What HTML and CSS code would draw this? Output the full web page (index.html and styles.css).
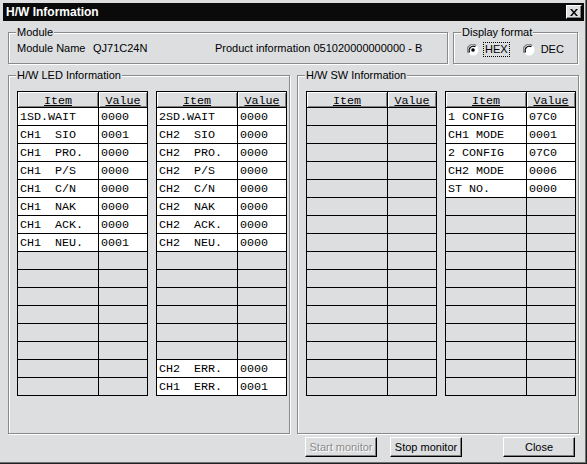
FILE: index.html
```html
<!DOCTYPE html>
<html>
<head>
<meta charset="utf-8">
<link rel="stylesheet" href="styles.css">
</head>
<body>
<div class="window">
  <div class="titlebar">
    <span class="title">H/W Information</span>
    <span class="close-btn"><svg width="8" height="7" viewBox="0 0 8 7"><path d="M0 0h2l2 2.5L6 0h2L5 3.5 8 7H6L4 4.5 2 7H0l3-3.5z" fill="#000"/></svg></span>
  </div>
  <div class="top-row">
    <fieldset class="group module">
      <legend>Module</legend>
      <div class="module-row">
        <span class="mod-label">Module Name</span>
        <span class="mod-name">QJ71C24N</span>
        <span class="mod-prod">Product information 051020000000000 - B</span>
      </div>
    </fieldset>
    <fieldset class="group format">
      <legend>Display format</legend>
      <div class="radio-row">
        <span class="radio checked"><svg width="12" height="12" viewBox="0 0 12 12"><circle cx="6" cy="6" r="5.5" fill="#fff"/><path d="M1.5 9.2A5.5 5.5 0 0 1 9.2 1.5" fill="none" stroke="#808080" stroke-width="1.2"/><path d="M2.6 8.4A4.3 4.3 0 0 1 8.4 2.6" fill="none" stroke="#000" stroke-width="1.2"/><circle cx="6" cy="6" r="1.8" fill="#000"/></svg></span>
        <span class="radio-label focus">HEX</span>
        <span class="radio"><svg width="12" height="12" viewBox="0 0 12 12"><circle cx="6" cy="6" r="5.5" fill="#fff"/><path d="M1.5 9.2A5.5 5.5 0 0 1 9.2 1.5" fill="none" stroke="#808080" stroke-width="1.2"/><path d="M2.6 8.4A4.3 4.3 0 0 1 8.4 2.6" fill="none" stroke="#000" stroke-width="1.2"/></svg></span>
        <span class="radio-label">DEC</span>
      </div>
    </fieldset>
  </div>
  <div class="main-row">
    <fieldset class="group info">
      <legend>H/W LED Information</legend>
      <div class="tables">
        <div class="grid">
          <div class="hd">Item</div><div class="hd">Value</div>
          <div class="c">1SD.WAIT</div><div class="c">0000</div>
          <div class="c">CH1  SIO</div><div class="c">0001</div>
          <div class="c">CH1  PRO.</div><div class="c">0000</div>
          <div class="c">CH1  P/S</div><div class="c">0000</div>
          <div class="c">CH1  C/N</div><div class="c">0000</div>
          <div class="c">CH1  NAK</div><div class="c">0000</div>
          <div class="c">CH1  ACK.</div><div class="c">0000</div>
          <div class="c">CH1  NEU.</div><div class="c">0001</div>
          <div class="e"></div><div class="e"></div>
          <div class="e"></div><div class="e"></div>
          <div class="e"></div><div class="e"></div>
          <div class="e"></div><div class="e"></div>
          <div class="e"></div><div class="e"></div>
          <div class="e"></div><div class="e"></div>
          <div class="e"></div><div class="e"></div>
          <div class="e"></div><div class="e"></div>
        </div>
        <div class="grid">
          <div class="hd">Item</div><div class="hd">Value</div>
          <div class="c">2SD.WAIT</div><div class="c">0000</div>
          <div class="c">CH2  SIO</div><div class="c">0000</div>
          <div class="c">CH2  PRO.</div><div class="c">0000</div>
          <div class="c">CH2  P/S</div><div class="c">0000</div>
          <div class="c">CH2  C/N</div><div class="c">0000</div>
          <div class="c">CH2  NAK</div><div class="c">0000</div>
          <div class="c">CH2  ACK.</div><div class="c">0000</div>
          <div class="c">CH2  NEU.</div><div class="c">0000</div>
          <div class="e"></div><div class="e"></div>
          <div class="e"></div><div class="e"></div>
          <div class="e"></div><div class="e"></div>
          <div class="e"></div><div class="e"></div>
          <div class="e"></div><div class="e"></div>
          <div class="e"></div><div class="e"></div>
          <div class="c">CH2  ERR.</div><div class="c">0000</div>
          <div class="c">CH1  ERR.</div><div class="c">0001</div>
        </div>
      </div>
    </fieldset>
    <fieldset class="group info">
      <legend>H/W SW Information</legend>
      <div class="tables">
        <div class="grid">
          <div class="hd">Item</div><div class="hd">Value</div>
          <div class="e"></div><div class="e"></div>
          <div class="e"></div><div class="e"></div>
          <div class="e"></div><div class="e"></div>
          <div class="e"></div><div class="e"></div>
          <div class="e"></div><div class="e"></div>
          <div class="e"></div><div class="e"></div>
          <div class="e"></div><div class="e"></div>
          <div class="e"></div><div class="e"></div>
          <div class="e"></div><div class="e"></div>
          <div class="e"></div><div class="e"></div>
          <div class="e"></div><div class="e"></div>
          <div class="e"></div><div class="e"></div>
          <div class="e"></div><div class="e"></div>
          <div class="e"></div><div class="e"></div>
          <div class="e"></div><div class="e"></div>
          <div class="e"></div><div class="e"></div>
        </div>
        <div class="grid">
          <div class="hd">Item</div><div class="hd">Value</div>
          <div class="c">1 CONFIG</div><div class="c">07C0</div>
          <div class="c">CH1 MODE</div><div class="c">0001</div>
          <div class="c">2 CONFIG</div><div class="c">07C0</div>
          <div class="c">CH2 MODE</div><div class="c">0006</div>
          <div class="c">ST NO.</div><div class="c">0000</div>
          <div class="e"></div><div class="e"></div>
          <div class="e"></div><div class="e"></div>
          <div class="e"></div><div class="e"></div>
          <div class="e"></div><div class="e"></div>
          <div class="e"></div><div class="e"></div>
          <div class="e"></div><div class="e"></div>
          <div class="e"></div><div class="e"></div>
          <div class="e"></div><div class="e"></div>
          <div class="e"></div><div class="e"></div>
          <div class="e"></div><div class="e"></div>
          <div class="e"></div><div class="e"></div>
        </div>
      </div>
    </fieldset>
  </div>
  <div class="buttons">
    <button class="btn disabled">Start monitor</button>
    <button class="btn stop">Stop monitor</button>
    <button class="btn close">Close</button>
  </div>
</div>
</body>
</html>
```
FILE: styles.css
```css
html, body {
  margin: 0;
  padding: 0;
  background: #dcdee0;
}
.window {
  width: 587px;
  height: 464px;
  box-sizing: border-box;
  background: #dcdee0;
  border-right: 1px solid #202020;
  border-bottom: 1px solid #202020;
  box-shadow: inset -1px -1px 0 #707070;
  padding: 3px 2px 0 3px;
  font-family: "Liberation Sans", Arial, sans-serif;
  font-size: 11px;
  color: #000;
  display: flex;
  flex-direction: column;
}
.titlebar {
  height: 18px;
  background: #0a0a0a;
  display: flex;
  align-items: center;
  justify-content: space-between;
  padding: 0 2px 0 3px;
}
.title {
  color: #fff;
  font-weight: bold;
  font-size: 12px;
}
.close-btn {
  width: 16px;
  height: 14px;
  box-sizing: border-box;
  background: #dcdee0;
  border: 1px solid;
  border-color: #fff #000 #000 #fff;
  box-shadow: inset -1px -1px 0 #808080;
  display: flex;
  align-items: center;
  justify-content: center;
}
.group {
  margin: 0;
  border: 1px solid #8a8a8a;
  box-shadow: inset 1px 1px 0 #fff, 1px 1px 0 #fff;
  min-width: 0;
}
.group legend {
  padding: 0 1px;
  margin-left: -1px;
  line-height: 13px;
  font-weight: normal;
  background: #dcdee0;
}
.top-row {
  display: flex;
  margin-top: 5px;
  padding-left: 5px;
}
.module {
  width: 440px;
  box-sizing: border-box;
  padding: 3px 8px 6px 8px;
}
.module-row {
  display: flex;
  line-height: 13px;
}
.mod-label { width: 76px; }
.mod-name { width: 122px; }
.format {
  width: 125px;
  box-sizing: border-box;
  margin-left: 5px;
  padding: 3px 8px 6px 8px;
}
.radio-row {
  display: flex;
  align-items: center;
  line-height: 13px;
  padding-left: 5px;
}
.radio {
  width: 12px;
  height: 12px;
  display: flex;
}
.radio-label {
  margin-left: 4px;
  padding: 0 1px;
  border: 1px dotted transparent;
}
.radio-label.focus {
  border-color: #000;
  margin-right: 13px;
}
.main-row {
  display: flex;
  margin-top: 5px;
  padding-left: 5px;
}
.info {
  width: 282px;
  height: 365px;
  box-sizing: border-box;
  padding: 9px 8px 0 8px;
}
.info + .info {
  margin-left: 7px;
}
.tables {
  display: flex;
  gap: 8px;
}
.grid {
  display: grid;
  grid-template-columns: 80px 48px;
  grid-template-rows: 15px repeat(16, 17px);
  gap: 1px;
  padding: 1px;
  background: #000;
  font-family: "Liberation Mono", "Courier New", monospace;
  font-size: 11.7px;
}
.hd {
  background: #dcdee0;
  box-shadow: inset 1px 1px 0 #fff, inset -1px -1px 0 #808080;
  text-align: center;
  line-height: 14px;
  padding-top: 2px;
  box-sizing: border-box;
  text-decoration: underline;
  overflow: hidden;
}
.c {
  background: #fff;
  white-space: pre;
  padding-left: 2px;
  line-height: 17px;
  padding-top: 1px;
  box-sizing: border-box;
}
.e {
  background: #dcdee0;
}
.buttons {
  display: flex;
  margin-top: 3px;
  padding-left: 302px;
}
.btn {
  width: 72px;
  height: 20px;
  margin: 0;
  padding: 0;
  font-family: "Liberation Sans", Arial, sans-serif;
  font-size: 11px;
  color: #000;
  background: #dcdee0;
  border: 1px solid;
  border-color: #fff #000 #000 #fff;
  box-shadow: inset -1px -1px 0 #808080;
}
.btn.disabled {
  color: #8a8a8a;
  text-shadow: 1px 1px 0 #fff;
}
.btn.stop { margin-left: 13px; }
.btn.close { margin-left: 41px; }
```
